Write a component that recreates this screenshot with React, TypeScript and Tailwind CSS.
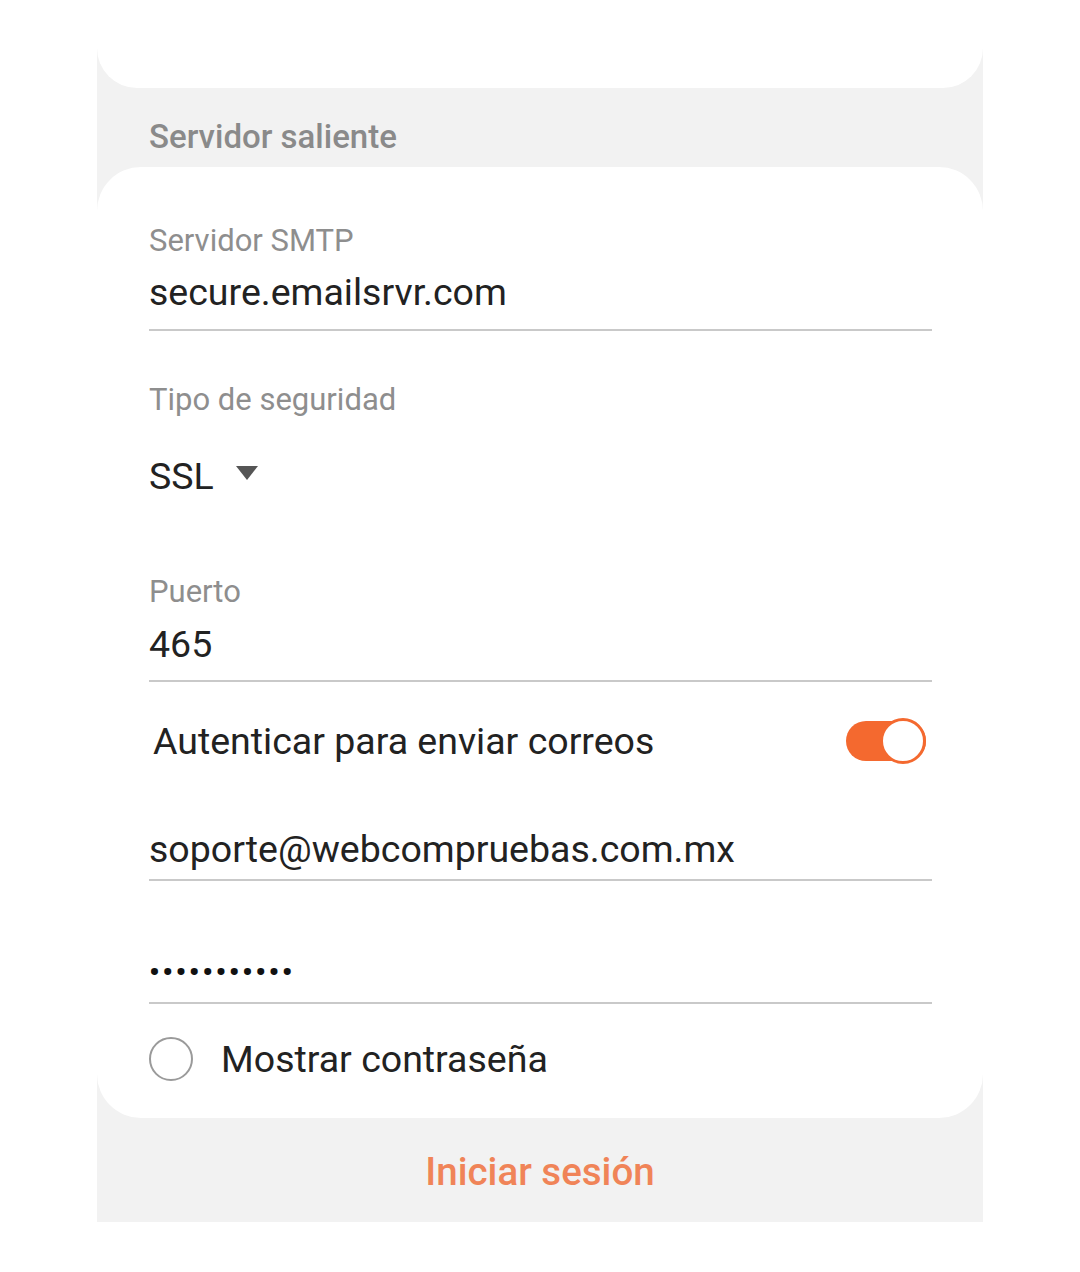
import React from "react";

const Label = ({ children, className = "" }: { children: React.ReactNode; className?: string }) => (
  <p className={`text-[31px] leading-[32px] text-[#8e8e8e] ${className}`}>{children}</p>
);

const Value = ({ children, className = "" }: { children: React.ReactNode; className?: string }) => (
  <p className={`text-[37.5px] leading-[44px] text-[#222] ${className}`}>{children}</p>
);

const Line = ({ className = "" }: { className?: string }) => (
  <div className={`h-[2px] w-full bg-[#c9c9c9] ${className}`} />
);

export default function App() {
  return (
    <div className="min-h-[1272px] bg-white pt-[48px] font-['Roboto',sans-serif]">
      <div className="mx-auto w-[886px] bg-[#f2f2f2]">
        <div className="h-[40px] rounded-b-[40px] bg-white" />

        <div className="flex h-[79px] items-center px-[52px] pt-[18px]">
          <h2 className="text-[33px] font-medium leading-none text-[#8a8a8a]">
            Servidor saliente
          </h2>
        </div>

        <div className="flex flex-col rounded-[44px] bg-white pl-[52px] pr-[51px] pt-[58px] pb-[35px]">
          <Label>Servidor SMTP</Label>
          <Value className="mt-[13px]">secure.emailsrvr.com</Value>
          <Line className="mt-[15px]" />

          <Label className="mt-[53px]">Tipo de seguridad</Label>
          <div className="mt-[38px] flex items-center gap-[22px]">
            <Value>SSL</Value>
            <svg width="22" height="14" viewBox="0 0 22 14" className="-mt-[6px]">
              <path d="M0 0 H22 L11 14 Z" fill="#555" />
            </svg>
          </div>

          <Label className="mt-[78px]">Puerto</Label>
          <Value className="mt-[14px]">465</Value>
          <Line className="mt-[14px]" />

          <div className="mt-[29px] flex h-[60px] items-center justify-between pl-[4px]">
            <span className="text-[37.5px] text-[#222]">Autenticar para enviar correos</span>
            <div className="mr-[6px] flex h-[40px] w-[80px] items-center justify-end rounded-full bg-[#f4692f]">
              <div className="h-[46px] w-[46px] rounded-full border-[3px] border-[#f4692f] bg-white" />
            </div>
          </div>

          <Value className="mt-[56px]">soporte@webcompruebas.com.mx</Value>
          <Line className="mt-[8px]" />

          <p className="mt-[69px] text-[30px] font-bold leading-[44px] tracking-[2.5px] text-[#111]">•••••••••••</p>
          <Line className="mt-[8px]" />

          <div className="mt-[31px] flex h-[48px] items-center gap-[28px]">
            <div className="h-[44px] w-[44px] rounded-full border-[2px] border-[#9a9a9a]" />
            <span className="text-[37.5px] text-[#222]">Mostrar contraseña</span>
          </div>
        </div>

        <div className="flex h-[104px] items-center justify-center pt-[4px]">
          <span className="text-[38.5px] font-medium text-[#f08458]">Iniciar sesión</span>
        </div>
      </div>
    </div>
  );
}
